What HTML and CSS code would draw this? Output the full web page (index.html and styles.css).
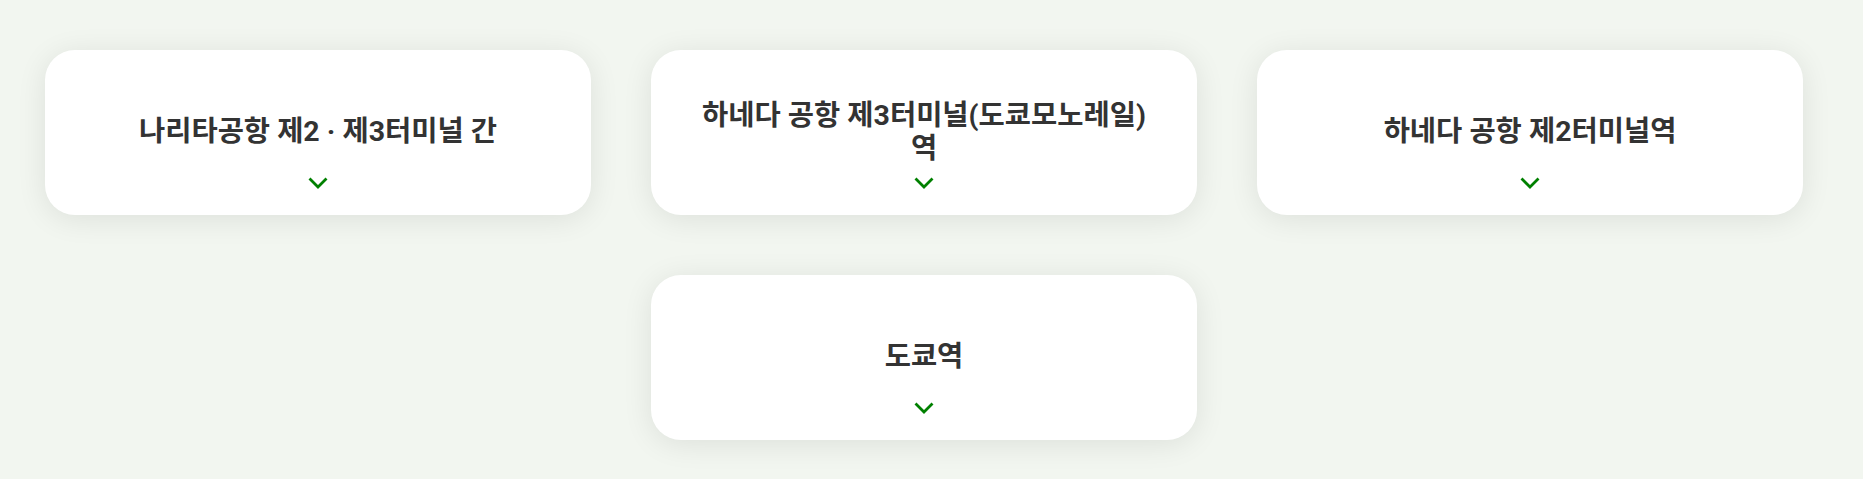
FILE: index.html
```html
<!DOCTYPE html>
<html>
<head>
    <meta charset="utf-8">
    <meta name="viewport" content="width=device-width, initial-scale=1">
    <title>역 안내</title>
    <link rel="stylesheet" href="styles.css">
</head>

<body>
    <section class="stations">
        <div class="station-card">
            <h3 class="station-name">나리타공항 제2 · 제3터미널 간</h3>
            <span class="toggle">
                <svg width="20" height="12" viewBox="0 0 20 12"><polyline points="1.5,1.5 10,10 18.5,1.5" /></svg>
            </span>
        </div>

        <div class="station-card">
            <h3 class="station-name">하네다 공항 제3터미널(도쿄모노레일)역</h3>
            <span class="toggle">
                <svg width="20" height="12" viewBox="0 0 20 12"><polyline points="1.5,1.5 10,10 18.5,1.5" /></svg>
            </span>
        </div>

        <div class="station-card">
            <h3 class="station-name">하네다 공항 제2터미널역</h3>
            <span class="toggle">
                <svg width="20" height="12" viewBox="0 0 20 12"><polyline points="1.5,1.5 10,10 18.5,1.5" /></svg>
            </span>
        </div>

        <div class="station-card">
            <h3 class="station-name">도쿄역</h3>
            <span class="toggle">
                <svg width="20" height="12" viewBox="0 0 20 12"><polyline points="1.5,1.5 10,10 18.5,1.5" /></svg>
            </span>
        </div>
    </section>
</body>
</html>
```

FILE: styles.css
```css
body{
    margin: 0;
    padding: 0;
    background-color: #f2f6f0;
    font-family: Roboto, "Noto Sans CJK KR", sans-serif;}

.stations{
    width: 1758px;
    margin-left: 45px;
    padding: 50px 0 40px;
    display: flex;
    flex-wrap: wrap;
    justify-content: center;
    column-gap: 60px;
    row-gap: 60px;}

.station-card{
    width: 546px;
    height: 165px;
    box-sizing: border-box;
    padding: 40px 48px 22px;
    background-color: #fff;
    border-radius: 30px;
    box-shadow: 0 4px 30px rgba(0, 0, 0, 0.09);
    display: flex;
    flex-direction: column;
    cursor: pointer;}

.station-name{
    flex: 1;
    margin: 0;
    display: flex;
    align-items: center;
    justify-content: center;
    text-align: center;
    font-size: 28.5px;
    font-weight: 700;
    line-height: 33px;
    color: #333;}

.toggle{
    height: 20px;
    display: flex;
    align-items: center;
    justify-content: center;}

.toggle svg polyline{
    fill: none;
    stroke: #008000;
    stroke-width: 2.8;}
```
